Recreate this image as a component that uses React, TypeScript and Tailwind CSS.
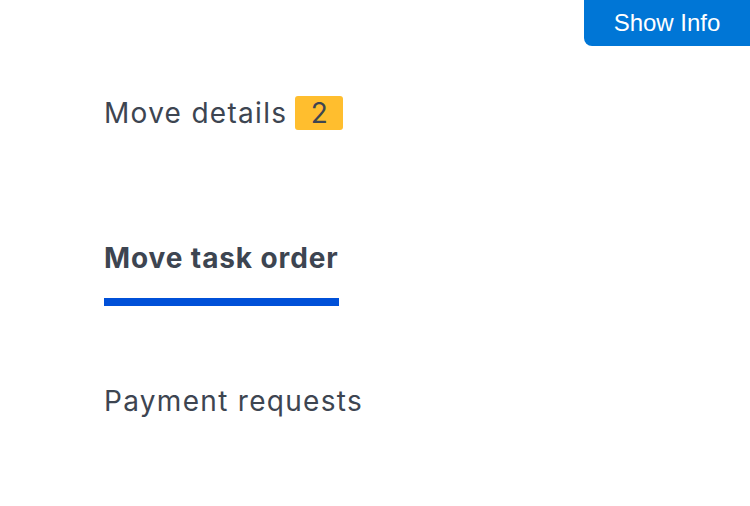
import React from "react";

const navItems = [
  { label: "Move details", badge: 2, active: false, height: "h-[145px]" },
  { label: "Move task order", active: true, height: "h-[143px]" },
  { label: "Payment requests", active: false, height: "h-[143px]" },
];

export default function App() {
  return (
    <div className="relative h-[506px] w-[750px] overflow-hidden bg-white">
      <button className="absolute right-0 top-0 flex h-[46px] w-[166px] items-center justify-center rounded-bl-lg bg-[#0076d6] pb-px text-[24px] text-white [font-family:'Liberation_Sans',Arial,sans-serif]">
        Show Info
      </button>

      <nav className="flex flex-col pl-[104px] pt-[94px] [font-family:Inter,'Noto_Sans',sans-serif] text-[#3d4551]">
        {navItems.map((item) => (
          <div key={item.label} className={`flex flex-col items-start ${item.height}`}>
            <div className="inline-flex flex-col">
              <div className="flex h-[38px] items-center gap-2">
                <span
                  className={
                    item.active
                      ? "text-[28px] font-bold tracking-[0.9px]"
                      : "text-[28px] tracking-[1.3px]"
                  }
                >
                  {item.label}
                </span>
                {item.badge !== undefined && (
                  <span className="flex h-[34px] w-[48px] items-center justify-center rounded-[3px] bg-[#ffbe2e] text-[28px]">
                    {item.badge}
                  </span>
                )}
              </div>
              {item.active && <div className="mt-[21px] h-2 bg-[#0050d8]" />}
            </div>
          </div>
        ))}
      </nav>
    </div>
  );
}
